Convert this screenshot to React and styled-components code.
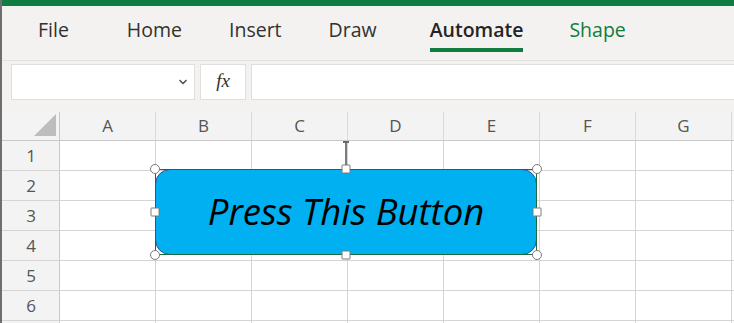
import React from "react";
import styled, { createGlobalStyle } from "styled-components";

const Global = createGlobalStyle`
  html, body { margin: 0; padding: 0; background: #f3f2f1; overflow: hidden; }
  body { width: 734px; height: 323px; }
  * { box-sizing: border-box; }
`;

const Frame = styled.div`
  width: 734px;
  height: 323px;
  border-left: 2px solid #6e6e6e;
  display: flex;
  flex-direction: column;
  overflow: hidden;
  background: #f3f2f1;
`;

const TopStripe = styled.div`
  height: 6px;
  flex: none;
  background: #107c41;
`;

const Menu = styled.nav`
  height: 55px;
  flex: none;
  display: flex;
  align-items: flex-start;
  gap: 47px;
  padding: 11px 0 0 36px;
  border-bottom: 1px solid #e3e1df;
  font-family: "Open Sans", "Noto Sans", sans-serif;
  font-size: 19.5px;
`;

const Tab = styled.div`
  display: flex;
  flex-direction: column;
  align-items: stretch;
  margin-right: ${(p) => p.$extra || 0}px;
  line-height: 26px;
  color: ${(p) => (p.$green ? "#107c41" : p.$active ? "#242424" : "#323130")};
  font-weight: ${(p) => (p.$active ? 600 : 400)};
`;

const Underline = styled.span`
  height: 4px;
  margin: 5px 0 0;
  background: ${(p) => (p.$on ? "#107c41" : "transparent")};
`;

const FormulaBar = styled.div`
  flex: none;
  display: flex;
  gap: 5px;
  padding: 3px 0 12px 9px;
  height: 51px;
`;

const Box = styled.div`
  height: 36px;
  background: #ffffff;
  border: 1px solid #e1dfdd;
  display: flex;
  align-items: center;
`;

const NameBox = styled(Box)`
  width: 184px;
  justify-content: flex-end;
  padding-right: 6px;
`;

const FxBox = styled(Box)`
  width: 46px;
  justify-content: center;
  font-family: "Liberation Serif", "DejaVu Serif", serif;
  font-style: italic;
  font-size: 19px;
  color: #323130;
  padding-bottom: 2px;
`;

const InputBox = styled(Box)`
  flex: 1;
  border-right: none;
`;

const SheetWrap = styled.div`
  position: relative;
  flex: none;
`;

const Sheet = styled.div`
  display: grid;
  grid-template-columns: 58px repeat(8, 96px);
  grid-template-rows: 29px repeat(7, 30px);
  font-family: "Open Sans", "Noto Sans", sans-serif;
  font-size: 17px;
  color: #555555;
`;

const Corner = styled.div`
  background: #f3f3f3;
  border-right: 1px solid #c8c8c8;
  border-bottom: 1px solid #c8c8c8;
  position: relative;
`;

const Triangle = styled.span`
  position: absolute;
  right: 3px;
  bottom: 4px;
  width: 22px;
  height: 22px;
  background: #bdbdbd;
  clip-path: polygon(100% 0, 100% 100%, 0 100%);
`;

const ColHead = styled.div`
  background: #f3f3f3;
  border-right: 1px solid #dadada;
  border-bottom: 1px solid #c8c8c8;
  display: flex;
  align-items: center;
  justify-content: center;
  line-height: 1;
  padding-bottom: 1px;
`;

const RowHead = styled.div`
  background: #f3f3f3;
  border-right: 1px solid #c8c8c8;
  border-bottom: 1px solid #d4d4d4;
  display: flex;
  align-items: center;
  justify-content: center;
  padding-left: 1px;
`;

const Cell = styled.div`
  background: #ffffff;
  border-right: 1px solid #d4d4d4;
  border-bottom: 1px solid #d4d4d4;
`;

const Shape = styled.div`
  position: absolute;
  left: 153px;
  top: 57px;
  width: 382px;
  height: 86px;
`;

const Fill = styled.button`
  width: 100%;
  height: 100%;
  margin: 0;
  padding: 0 0 2px;
  background: #00b0f0;
  border: 1.5px solid #2f5597;
  border-radius: 15px;
  display: flex;
  align-items: center;
  justify-content: center;
  font-family: "Open Sans", "Noto Sans", sans-serif;
  font-style: italic;
  font-size: 36.5px;
  color: #000000;
  cursor: pointer;
`;

const Selection = styled.div`
  position: absolute;
  inset: 0;
  border: 1px solid #1e6b40;
  pointer-events: none;
`;

const Handle = styled.span`
  position: absolute;
  left: ${(p) => p.$x}%;
  top: ${(p) => p.$y}%;
  width: ${(p) => (p.$round ? 10 : 9)}px;
  height: ${(p) => (p.$round ? 10 : 9)}px;
  transform: translate(-50%, -50%);
  background: #ffffff;
  border: 1.5px solid #7b7b7b;
  border-radius: ${(p) => (p.$round ? "50%" : "1px")};
`;

const RotateStem = styled.span`
  position: absolute;
  left: 50%;
  bottom: calc(100% + 3px);
  width: 2px;
  height: 25px;
  transform: translateX(-50%);
  background: #7b7b7b;
  &::before {
    content: "";
    position: absolute;
    top: 0;
    left: -2px;
    width: 6px;
    height: 2px;
    background: #6a6a6a;
  }
`;

const cols = ["A", "B", "C", "D", "E", "F", "G", ""];
const rows = ["1", "2", "3", "4", "5", "6", ""];
const tabs = [
  { label: "File", extra: 11 },
  { label: "Home" },
  { label: "Insert" },
  { label: "Draw", extra: 6 },
  { label: "Automate", active: true, extra: -1 },
  { label: "Shape", green: true },
];
const handles = [
  { x: 0, y: 0, round: true },
  { x: 50, y: 0 },
  { x: 100, y: 0, round: true },
  { x: 0, y: 50 },
  { x: 100, y: 50 },
  { x: 0, y: 100, round: true },
  { x: 50, y: 100 },
  { x: 100, y: 100, round: true },
];

export default function App() {
  return (
    <>
      <Global />
      <Frame>
        <TopStripe />
        <Menu>
          {tabs.map((t) => (
            <Tab key={t.label} $active={t.active} $green={t.green} $extra={t.extra}>
              <span>{t.label}</span>
              <Underline $on={t.active} />
            </Tab>
          ))}
        </Menu>
        <FormulaBar>
          <NameBox>
            <svg width="10" height="6" viewBox="0 0 10 6">
              <polyline points="1.5,1 5,4.5 8.5,1" fill="none" stroke="#444" strokeWidth="1.3" />
            </svg>
          </NameBox>
          <FxBox>fx</FxBox>
          <InputBox />
        </FormulaBar>
        <SheetWrap>
          <Sheet>
            <Corner>
              <Triangle />
            </Corner>
            {cols.map((c, i) => (
              <ColHead key={"h" + i}>{c}</ColHead>
            ))}
            {rows.map((r, ri) => (
              <React.Fragment key={ri}>
                <RowHead>{r}</RowHead>
                {cols.map((c, i) => (
                  <Cell key={ri + "-" + i} />
                ))}
              </React.Fragment>
            ))}
          </Sheet>
          <Shape>
            <Fill type="button">Press This Button</Fill>
            <Selection />
            <RotateStem />
            {handles.map((h, i) => (
              <Handle key={i} $x={h.x} $y={h.y} $round={h.round} />
            ))}
          </Shape>
        </SheetWrap>
      </Frame>
    </>
  );
}
